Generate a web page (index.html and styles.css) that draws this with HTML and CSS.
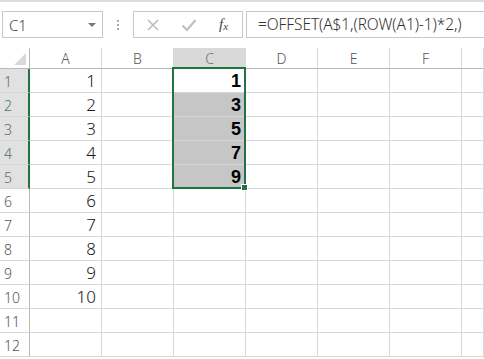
FILE: index.html
```html
<!DOCTYPE html>
<html>
<head>
<meta charset="utf-8">
<link rel="stylesheet" href="styles.css">
</head>
<body>
<div class="toolbar">
  <div class="namebox"><span class="ref">C1</span><span class="caret"></span></div>
  <div class="grip"><i></i><i></i><i></i></div>
  <div class="btns">
    <svg class="ico" width="14" height="14" viewBox="0 0 14 14"><path d="M2 2 L12 12 M12 2 L2 12" stroke="#bdbdbd" stroke-width="1.6" fill="none"/></svg>
    <svg class="ico" width="16" height="14" viewBox="0 0 16 14"><path d="M1.5 7.5 L6 12 L14.5 2" stroke="#bdbdbd" stroke-width="2" fill="none"/></svg>
    <span class="fx">f<sub>x</sub></span>
  </div>
  <div class="formula">=OFFSET(A$1,(ROW(A1)-1)*2,)</div>
</div>
<div class="sheet">
  <div class="grid">
    <div class="h corner"><span class="tri"></span></div>
    <div class="h col">A</div><div class="h col">B</div><div class="h col selc">C</div><div class="h col">D</div><div class="h col">E</div><div class="h col">F</div><div class="h col last"></div>

    <div class="h row selr">1</div><div class="c">1</div><div class="c"></div><div class="c b">1</div><div class="c"></div><div class="c"></div><div class="c"></div><div class="c"></div>
    <div class="h row selr">2</div><div class="c">2</div><div class="c"></div><div class="c b g">3</div><div class="c"></div><div class="c"></div><div class="c"></div><div class="c"></div>
    <div class="h row selr">3</div><div class="c">3</div><div class="c"></div><div class="c b g">5</div><div class="c"></div><div class="c"></div><div class="c"></div><div class="c"></div>
    <div class="h row selr">4</div><div class="c">4</div><div class="c"></div><div class="c b g">7</div><div class="c"></div><div class="c"></div><div class="c"></div><div class="c"></div>
    <div class="h row selr">5</div><div class="c">5</div><div class="c"></div><div class="c b g">9</div><div class="c"></div><div class="c"></div><div class="c"></div><div class="c"></div>
    <div class="h row">6</div><div class="c">6</div><div class="c"></div><div class="c"></div><div class="c"></div><div class="c"></div><div class="c"></div><div class="c"></div>
    <div class="h row">7</div><div class="c">7</div><div class="c"></div><div class="c"></div><div class="c"></div><div class="c"></div><div class="c"></div><div class="c"></div>
    <div class="h row">8</div><div class="c">8</div><div class="c"></div><div class="c"></div><div class="c"></div><div class="c"></div><div class="c"></div><div class="c"></div>
    <div class="h row">9</div><div class="c">9</div><div class="c"></div><div class="c"></div><div class="c"></div><div class="c"></div><div class="c"></div><div class="c"></div>
    <div class="h row">10</div><div class="c">10</div><div class="c"></div><div class="c"></div><div class="c"></div><div class="c"></div><div class="c"></div><div class="c"></div>
    <div class="h row">11</div><div class="c"></div><div class="c"></div><div class="c"></div><div class="c"></div><div class="c"></div><div class="c"></div><div class="c"></div>
    <div class="h row">12</div><div class="c"></div><div class="c"></div><div class="c"></div><div class="c"></div><div class="c"></div><div class="c"></div><div class="c"></div>
  </div>
  <div class="selection"><span class="handle"></span></div>
</div>
</body>
</html>
```
FILE: styles.css
```css
html, body {
  margin: 0;
  padding: 0;
  background: #fff;
  overflow: hidden;
  width: 484px;
  height: 359px;
  font-family: "Noto Sans", "Liberation Sans", sans-serif;
}
.toolbar {
  border-top: 2px solid #dcdcdc;
  display: flex;
  align-items: flex-start;
  padding-top: 9px;
  box-sizing: border-box;
  height: 48px;
}
.namebox {
  margin-left: 2px;
  width: 101px;
  height: 27px;
  box-sizing: border-box;
  border: 1px solid #c8c8c8;
  display: flex;
  align-items: center;
  justify-content: space-between;
  padding: 0 6px 0 6px;
}
.ref {
  font-size: 15px;
  color: #444;
  font-family: "Noto Sans", sans-serif;
  font-weight: 300;
}
.caret {
  width: 0;
  height: 0;
  border-left: 4px solid transparent;
  border-right: 4px solid transparent;
  border-top: 4px solid #777;
  margin-top: 1px;
}
.grip {
  width: 30px;
  height: 27px;
  display: flex;
  flex-direction: column;
  align-items: center;
  justify-content: center;
  gap: 2px;
}
.grip i {
  width: 2px;
  height: 2px;
  background: #aaa;
  display: block;
}
.btns {
  width: 110px;
  height: 27px;
  box-sizing: border-box;
  border: 1px solid #c8c8c8;
  display: flex;
  align-items: center;
  padding-left: 12px;
}
.btns .ico:first-child { margin-right: 21px; }
.btns .ico:nth-child(2) { margin-right: 22px; }
.fx {
  font-family: "Liberation Serif", serif;
  font-style: italic;
  font-size: 15px;
  color: #444;
  line-height: 1;
}
.fx sub {
  font-size: 11px;
  vertical-align: baseline;
  position: relative;
  top: 1px;
}
.formula {
  margin-left: 3px;
  flex: 1;
  height: 27px;
  box-sizing: border-box;
  border: 1px solid #c8c8c8;
  border-right: none;
  padding-left: 11px;
  font-size: 15.5px;
  line-height: 25px;
  color: #333;
  font-weight: 300;
  white-space: nowrap;
  letter-spacing: -0.1px;
}
.sheet {
  position: relative;
}
.grid {
  display: grid;
  grid-template-columns: 30px repeat(6, 72px) 1fr;
  grid-template-rows: 21px repeat(12, 24px);
}
.grid > div {
  box-sizing: border-box;
  border-right: 1px solid #d8d8d8;
  border-bottom: 1px solid #d8d8d8;
}
.h {
  font-size: 14px;
  color: #555;
  font-weight: 300;
  display: flex;
  align-items: center;
  justify-content: center;
  background: #fff;
}
.col { border-bottom-color: #b8b8b8 !important; }
.row { border-right-color: #b8b8b8 !important; justify-content: flex-start; padding-left: 4px; padding-top: 2px; }
.corner { position: relative; border-bottom-color: #b8b8b8 !important; border-right-color: #b8b8b8 !important; }
.tri {
  position: absolute;
  right: 3px;
  bottom: 3px;
  width: 0;
  height: 0;
  border-left: 12px solid transparent;
  border-bottom: 12px solid #d9d9d9;
}
.selc {
  background: #d9d9d9;
  color: #5d7a68;
}
.selr {
  background: #e1e1e1;
  color: #4f7460;
  border-right: 2px solid #217346 !important;
}
.c {
  font-size: 17px;
  color: #1a1a1a;
  display: flex;
  align-items: flex-end;
  justify-content: flex-end;
  padding-right: 5px;
  line-height: 22px;
  font-weight: 300;
}
.c.b {
  font-weight: 700;
  font-family: "Liberation Sans", sans-serif;
  font-size: 18px;
  color: #000;
  padding-right: 4px;
}
.c.g {
  background: #c6c6c6;
}
.selection {
  position: absolute;
  left: 172px;
  top: 19px;
  width: 74px;
  height: 122px;
  box-sizing: border-box;
  border: 2px solid #217346;
  pointer-events: none;
}
.handle {
  position: absolute;
  right: -4px;
  bottom: -4px;
  width: 5px;
  height: 5px;
  background: #217346;
  border: 1px solid #fff;
}
```
